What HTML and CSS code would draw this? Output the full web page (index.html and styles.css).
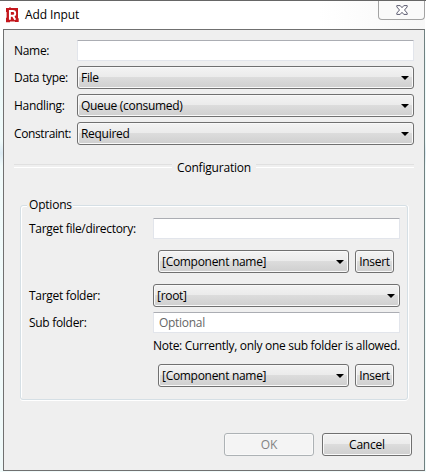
FILE: index.html
```
<!DOCTYPE html>
<html lang="en">
<head>
<meta charset="utf-8">
<title>Add Input</title>
<link rel="stylesheet" href="styles.css">
</head>
<body>
<div class="window">
  <header class="titlebar">
    <svg class="logo" width="13" height="16" viewBox="0 0 13 16">
      <path fill="#c4161c" d="M0 1h3V.4h2V1h7v10l.7.5V15H9v-.6H4v.9H0V11l.6-.5V5H0z"/>
      <path fill="none" stroke="#fff" stroke-width="1.9" d="M3.9 12.8V4h2.9c3.2 0 3.2 4.8 0 4.8H3.9m3 0 2.4 4"/>
    </svg>
    <span class="title">Add Input</span>
    <span class="close">
      <svg width="12" height="10" viewBox="0 0 12 10">
        <path fill="#fff" stroke="#5c5c70" stroke-linejoin="round" d="M.8.6h3.4L6 2.7 7.8.6h3.4v1.3L8.5 5l2.7 3.1v1.3H7.8L6 7.3 4.2 9.4H.8V8.1L3.5 5 .8 1.9z"/>
      </svg>
    </span>
  </header>
  <main class="client">
    <div class="form">
      <label>Name:</label><div class="input"></div>
      <label>Data type:</label><div class="combo">File</div>
      <label>Handling:</label><div class="combo">Queue (consumed)</div>
      <label class="tight">Constraint:</label><div class="combo">Required</div>
    </div>
    <div class="divider"><span>Configuration</span></div>
    <section class="group">
      <div class="legend">Options</div>
      <div class="options">
        <label>Target file/directory:</label><div class="input"></div>
        <div class="insert first"><div class="combo">[Component name]</div><div class="button">Insert</div></div>
        <label>Target folder:</label><div class="combo">[root]</div>
        <label>Sub folder:</label><div class="input hint">Optional</div>
        <div class="note">Note: Currently, only one sub folder is allowed.</div>
        <div class="insert second"><div class="combo">[Component name]</div><div class="button">Insert</div></div>
      </div>
    </section>
    <footer class="actions">
      <div class="button disabled">OK</div>
      <div class="button">Cancel</div>
    </footer>
  </main>
</div>
</body>
</html>
```
FILE: styles.css
```
* { box-sizing: border-box; }
body {
  margin: 0;
  font: 12px/16px "Open Sans", "Noto Sans", sans-serif;
  letter-spacing: -0.3px;
  color: #000;
  white-space: nowrap;
}
.window {
  width: 426px;
  height: 472px;
  padding: 0 1px 1px 3px;
  border-top: 1px solid #666;
  background: linear-gradient(#fff, #fff 35px, #edfafa 60px, #f0fbfb 140px, #dcebf4 152px, #f1fbfb 165px, #f0fafa);
}
.titlebar {
  display: flex;
  align-items: flex-start;
  height: 28px;
  background: linear-gradient(90deg, #fff 75%, #f7f7f7);
}
.logo { margin: 6px 0 0 3px; }
.title { margin: 6px 0 0 6px; letter-spacing: -0.1px; }
.close {
  display: flex;
  justify-content: center;
  width: 47px;
  height: 19px;
  margin-left: auto;
  padding-top: 4px;
  border: 1px solid #a3a3a3;
  border-top: 0;
  border-radius: 0 0 4px 4px;
  background: #fafafa;
}
.client {
  height: 442px;
  padding: 10px 9px 0 10px;
  border: 1px solid #707070;
  border-right-color: #6f8080;
  background: #efefef;
}
.form {
  display: grid;
  grid-template-columns: 63px 337px;
  row-gap: 5px;
  align-items: center;
}
.tight { letter-spacing: -0.4px; }
.input {
  height: 21px;
  border: 1px solid #e2e5eb;
  border-top-color: #abadb3;
  border-radius: 1px;
  background: #fff;
}
.combo, .button {
  height: 23px;
  border: 1px solid #707070;
  border-radius: 3px;
  background: linear-gradient(#f3f3f3, #ebebeb 48%, #dcdcdc 50%, #cfcfcf);
  box-shadow: inset 0 0 0 1px #f9f9f9;
}
.combo {
  display: flex;
  align-items: center;
  justify-content: space-between;
  padding: 0 4px 0 3px;
}
.combo::after {
  content: "";
  border: solid transparent;
  border-width: 4px 4px 0;
  border-top-color: #000;
}
.button {
  display: flex;
  align-items: center;
  justify-content: center;
}
.divider {
  display: flex;
  align-items: center;
  gap: 5px;
  width: 400px;
  margin-top: 15px;
  letter-spacing: -0.2px;
}
.divider::before, .divider::after {
  content: "";
  flex: 1;
  height: 2px;
  margin-bottom: 4px;
  border-top: 1px solid #e0e0e0;
  border-bottom: 1px solid #fff;
}
.group {
  width: 388px;
  height: 195px;
  margin: 29px 0 0 6px;
  padding: 0 7px 0 8px;
  border: 1px solid #d5dfe5;
  border-radius: 3px;
  box-shadow: inset 1px 1px #fff, 0 1px #fff, 1px 0 #fff;
}
.legend {
  width: 46px;
  margin: -9px 0 5px -2px;
  padding-left: 2px;
  background: #efefef;
  letter-spacing: -0.2px;
}
.options {
  display: grid;
  grid-template-columns: 124px 247px;
  row-gap: 5px;
  align-items: center;
}
.insert {
  display: flex;
  grid-column: 2;
  gap: 6px;
  padding-left: 5px;
}
.insert .combo { width: 191px; }
.insert .button { width: 39px; }
.first { margin: 6px 0; }
.second { margin-top: 6px; }
.hint {
  padding: 2px 5px;
  color: #666;
}
.note { grid-column: 2; height: 15px; }
.actions {
  display: flex;
  justify-content: flex-end;
  gap: 8px;
  margin: 33px 3px 0 0;
  letter-spacing: -0.2px;
}
.actions .button { width: 90px; }
.actions .disabled {
  border-color: #adb2b5;
  background: #f4f4f4;
  color: #838383;
}
```
